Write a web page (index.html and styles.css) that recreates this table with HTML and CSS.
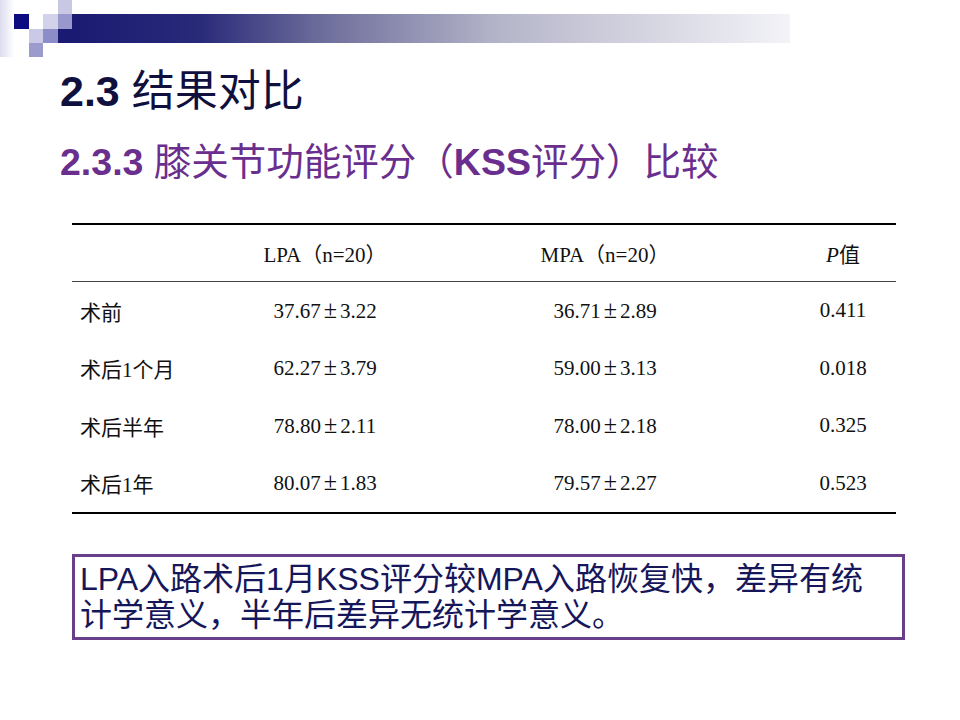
FILE: index.html
```html
<!DOCTYPE html>
<html lang="zh-CN">
<head>
<meta charset="utf-8">
<title>2.3 结果对比</title>
<link rel="stylesheet" href="styles.css">
</head>
<body>
<div class="slide">
  <svg class="deco" width="790" height="60" viewBox="0 0 790 60" aria-hidden="true">
    <defs>
      <linearGradient id="bar" x1="0" y1="0" x2="1" y2="0">
        <stop offset="0" stop-color="#1a1a72"/>
        <stop offset="0.18" stop-color="#2a2a7a"/>
        <stop offset="0.35" stop-color="#6e6e9c"/>
        <stop offset="0.6" stop-color="#b6b6ca"/>
        <stop offset="1" stop-color="#f3f3f8"/>
      </linearGradient>
      <linearGradient id="strip" x1="0" y1="0" x2="1" y2="0">
        <stop offset="0" stop-color="#dcdcee"/>
        <stop offset="1" stop-color="#ffffff"/>
      </linearGradient>
    </defs>
    <rect x="0" y="0" width="14" height="57" fill="url(#strip)"/>
    <rect x="14" y="14" width="15" height="15" fill="#0c0c80"/>
    <rect x="43" y="14" width="15" height="15" fill="#d2d2ea"/>
    <rect x="58" y="0" width="14" height="14" fill="#c8c8e4"/>
    <rect x="58" y="14" width="14" height="15" fill="#9898cc"/>
    <rect x="29" y="29" width="14" height="14" fill="#cacae6"/>
    <rect x="43" y="29" width="15" height="14" fill="#8c8cc8"/>
    <rect x="29" y="43" width="14" height="14" fill="#9c9ccc"/>
    <rect x="58" y="29" width="14" height="14" fill="#1a1a72"/>
    <rect x="72" y="14" width="718" height="29" fill="url(#bar)"/>
  </svg>

  <h1 class="title"><b>2.3</b> 结果对比</h1>
  <h2 class="subtitle"><b>2.3.3</b> 膝关节功能评分（<b>KSS</b>评分）比较</h2>

  <div class="table">
    <div class="row head">
      <div class="c1"></div>
      <div class="c2">LPA（n=20）</div>
      <div class="c3">MPA（n=20）</div>
      <div class="c4"><i>P</i>值</div>
    </div>
    <div class="row">
      <div class="c1">术前</div>
      <div class="c2">37.67<span class="pm">±</span>3.22</div>
      <div class="c3">36.71<span class="pm">±</span>2.89</div>
      <div class="c4">0.411</div>
    </div>
    <div class="row">
      <div class="c1">术后1个月</div>
      <div class="c2">62.27<span class="pm">±</span>3.79</div>
      <div class="c3">59.00<span class="pm">±</span>3.13</div>
      <div class="c4">0.018</div>
    </div>
    <div class="row">
      <div class="c1">术后半年</div>
      <div class="c2">78.80<span class="pm">±</span>2.11</div>
      <div class="c3">78.00<span class="pm">±</span>2.18</div>
      <div class="c4">0.325</div>
    </div>
    <div class="row">
      <div class="c1">术后1年</div>
      <div class="c2">80.07<span class="pm">±</span>1.83</div>
      <div class="c3">79.57<span class="pm">±</span>2.27</div>
      <div class="c4">0.523</div>
    </div>
  </div>

  <div class="note">LPA入路术后1月KSS评分较MPA入路恢复快，差异有统<br>计学意义，半年后差异无统计学意义。</div>
</div>
</body>
</html>
```

FILE: styles.css
```css
html, body {
  margin: 0;
  padding: 0;
  background: #ffffff;
}

.slide {
  width: 960px;
  height: 720px;
  overflow: hidden;
  font-family: "Liberation Sans", "Noto Sans CJK SC", sans-serif;
}

.deco {
  display: block;
}

.title {
  margin: 9px 0 0 60px;
  font-size: 43px;
  line-height: 44px;
  font-weight: normal;
  color: #10103e;
  white-space: nowrap;
}

.subtitle {
  margin: 29px 0 0 60px;
  font-size: 37.5px;
  line-height: 40px;
  font-weight: normal;
  color: #6a2f8e;
  white-space: nowrap;
}

.title b,
.subtitle b {
  font-weight: bold;
}

.table {
  margin: 41px 0 0 72px;
  width: 824px;
  border-top: 2px solid #000;
  border-bottom: 2px solid #000;
  font-family: "Liberation Serif", "Noto Sans CJK SC", serif;
  font-size: 21px;
  color: #111;
}

.row {
  display: grid;
  grid-template-columns: 128px 250px 310px 136px;
  align-items: center;
  height: 57.5px;
}

.row.head {
  height: 56px;
  border-bottom: 1px solid #444;
}

.c1 {
  padding-left: 8px;
  white-space: nowrap;
}

.c2,
.c3 {
  text-align: center;
  white-space: nowrap;
}

.c4 {
  text-align: center;
  padding-left: 30px;
  white-space: nowrap;
}

.pm {
  font-size: 1.15em;
  line-height: 1;
  padding: 0 3px;
}

.note {
  margin: 40px 0 0 72px;
  width: 833px;
  box-sizing: border-box;
  border: 3px solid #6a3f8a;
  padding: 4px 5px;
  font-size: 32px;
  line-height: 36px;
  color: #16165a;
  white-space: nowrap;
}
```
